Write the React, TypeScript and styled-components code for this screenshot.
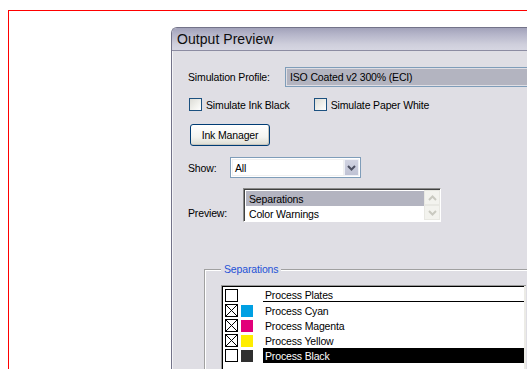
import React from "react";
import styled, { createGlobalStyle } from "styled-components";

const Global = createGlobalStyle`
  html, body { margin: 0; padding: 0; overflow: hidden; background: #fff; }
  body { width: 527px; height: 369px; font-family: "Liberation Sans", Arial, sans-serif; }
  #root { height: 100%; }
`;

const Frame = styled.div`
  margin: 10px 0 0 8px;
  height: calc(100% - 10px);
  border-top: 1px solid #ff0000;
  border-left: 1px solid #ff0000;
  padding: 16px 0 0 162px;
  box-sizing: border-box;
`;

const Window = styled.div`
  width: 380px;
  height: 400px;
  border: 1px solid #737389;
  border-right: none;
  border-bottom: none;
  border-top-left-radius: 6px;
  overflow: hidden;
  display: flex;
  flex-direction: column;
`;

const TitleBar = styled.div`
  height: 22px;
  flex: none;
  display: flex;
  align-items: center;
  padding-left: 5px;
  background: linear-gradient(#a2a2ba 0%, #b6b6ca 30%, #cfcfdc 75%, #d6d6e2 100%);
  border-bottom: 1px solid #8c8ca2;
  font-size: 14px;
  color: #0d0d0d;
  letter-spacing: 0.05px;
`;

const Body = styled.div`
  flex: 1;
  background: #dfdee4;
  box-shadow: inset 1px 0 0 #f4f4f7;
  padding: 15px 0 0 16px;
  display: flex;
  flex-direction: column;
  align-items: flex-start;
  font-size: 10.5px;
  letter-spacing: -0.15px;
  color: #000;
`;

const Row = styled.div<{ $mt?: number; $align?: string }>`
  display: flex;
  align-items: ${(p) => p.$align || "center"};
  margin-top: ${(p) => p.$mt ?? 0}px;
`;

const Label = styled.span<{ $w: number; $mb?: number }>`
  width: ${(p) => p.$w}px;
  flex: none;
  margin-bottom: ${(p) => p.$mb ?? 0}px;
`;

const ProfileBox = styled.div`
  width: 260px;
  height: 20px;
  border: 1px solid #7f9db9;
  border-right: none;
  padding: 1px 0 1px 1px;
  background: #dfdee4;
  box-sizing: border-box;
  display: flex;
`;

const ProfileValue = styled.div`
  flex: 1;
  background: #b3b4c0;
  display: flex;
  align-items: center;
  padding-left: 3px;
`;

const CheckLabel = styled.label<{ $ml?: number }>`
  display: flex;
  align-items: center;
  gap: 4px;
  margin-left: ${(p) => p.$ml ?? 0}px;
`;

const XPBox = styled.span`
  width: 13px;
  height: 13px;
  box-sizing: border-box;
  border: 1px solid #1c5180;
  background: linear-gradient(135deg, #dcdcd6 0%, #f2f2ee 60%, #ffffff 100%);
`;

const Button = styled.button`
  width: 80px;
  height: 22px;
  margin-left: 2px;
  border: 1px solid #003c74;
  border-radius: 3px;
  background: linear-gradient(#ffffff 0%, #f4f4f0 60%, #dcdcd2 100%);
  box-shadow: inset -1px -1px 0 #c6c6be;
  font-family: inherit;
  font-size: 10.5px;
  letter-spacing: -0.15px;
  color: #000;
  padding: 0;
`;

const ShowBox = styled.div`
  width: 131px;
  height: 21px;
  border: 1px solid #7f9db9;
  box-sizing: border-box;
  background: #fff;
  display: flex;
  padding: 1px;
`;

const ShowValue = styled.div`
  flex: 1;
  display: flex;
  align-items: center;
  padding-left: 2px;
  border: 1px solid #f0f0f0;
`;

const ArrowBtn = styled.div`
  width: 15px;
  flex: none;
  background: linear-gradient(#d2d4e2, #bfc2d4);
  border: 1px solid #eef0f6;
  box-sizing: border-box;
  display: flex;
  align-items: center;
  justify-content: center;
`;

const PreviewList = styled.div`
  width: 198px;
  height: 34px;
  box-sizing: border-box;
  border-top: 1px solid #8a8a8a;
  border-left: 1px solid #8a8a8a;
  border-right: 1px solid #ffffff;
  border-bottom: 1px solid #ffffff;
  box-shadow: inset 1px 1px 0 #404040;
  background: #fff;
  display: flex;
  padding: 2px 0 0 2px;
`;

const PreviewItems = styled.div`
  flex: 1;
  display: flex;
  flex-direction: column;
`;

const PreviewItem = styled.div<{ $sel?: boolean }>`
  height: 15px;
  display: flex;
  align-items: center;
  padding-left: 3px;
  background: ${(p) => (p.$sel ? "#b3b4c0" : "#fff")};
`;

const ScrollCol = styled.div`
  width: 16px;
  display: flex;
  flex-direction: column;
  margin-top: -1px;
`;

const ScrollBtn = styled.div`
  height: 15px;
  border: 1px solid #e8e8e2;
  background: #f3f3ee;
  box-sizing: border-box;
  display: flex;
  align-items: center;
  justify-content: center;
`;

const Group = styled.fieldset`
  margin: 41px 0 0 16px;
  padding: 9px 0 0 16px;
  width: 360px;
  height: 200px;
  border: 1px solid #a0a0a0;
  border-right: none;
  border-bottom: none;
  box-shadow: inset 1px 1px 0 #ffffff;
  min-width: 0;
`;

const Legend = styled.legend`
  padding: 0 3px;
  color: #2452d6;
  background: #dfdee4;
  line-height: 13px;
`;

const SepList = styled.div`
  width: 305px;
  height: 120px;
  border-top: 1px solid #9a9a9a;
  border-left: 1px solid #9a9a9a;
  box-shadow: inset 1px 1px 0 #000;
  background: #fff;
  padding: 2px 0 0 2px;
  box-sizing: border-box;
  position: relative;
`;

const SepRow = styled.div`
  height: 15px;
  display: flex;
  align-items: center;
`;

const Box = styled.span`
  width: 13px;
  height: 13px;
  margin-left: 1px;
  box-sizing: border-box;
  border: 1px solid #000;
  background: #fff;
  display: flex;
  flex: none;
`;

const Swatch = styled.span<{ $c?: string }>`
  width: 12px;
  height: 12px;
  margin-left: 3px;
  flex: none;
  background: ${(p) => p.$c || "transparent"};
`;

const SepName = styled.span<{ $sel?: boolean; $header?: boolean }>`
  flex: 1;
  margin-left: 10px;
  height: ${(p) => (p.$header ? 14 : 15)}px;
  display: flex;
  align-items: center;
  padding: 1px 0 0 2px;
  box-sizing: border-box;
  background: ${(p) => (p.$sel ? "#000" : "transparent")};
  color: ${(p) => (p.$sel ? "#fff" : "#000")};
  border-bottom: ${(p) => (p.$header ? "1px solid #000" : "none")};
  align-self: flex-start;
`;

const RightEdge = styled.div`
  position: absolute;
  top: 0;
  right: 0;
  width: 2px;
  height: 100%;
  background: #ecebe6;
`;

const Chevron = ({ color, up }: { color: string; up?: boolean }) => (
  <svg width="9" height="6" viewBox="0 0 9 6">
    <path
      d={up ? "M1 5 L4.5 1.5 L8 5" : "M1 1 L4.5 4.5 L8 1"}
      fill="none"
      stroke={color}
      strokeWidth="2"
    />
  </svg>
);

const XMark = () => (
  <svg width="11" height="11" viewBox="0 0 11 11">
    <path d="M0 0 L11 11 M11 0 L0 11" stroke="#000" strokeWidth="1" />
  </svg>
);

const seps = [
  { name: "Process Cyan", color: "#00a0e3", checked: true },
  { name: "Process Magenta", color: "#e2007a", checked: true },
  { name: "Process Yellow", color: "#ffed00", checked: true },
  { name: "Process Black", color: "#2f2f2f", checked: false, sel: true },
];

export default function App() {
  return (
    <>
      <Global />
      <Frame>
        <Window>
          <TitleBar>Output Preview</TitleBar>
          <Body>
            <Row $mt={1}>
              <Label $w={97}>Simulation Profile:</Label>
              <ProfileBox>
                <ProfileValue>ISO Coated v2 300% (ECI)</ProfileValue>
              </ProfileBox>
            </Row>
            <Row $mt={11}>
              <CheckLabel $ml={1}>
                <XPBox />
                Simulate Ink Black
              </CheckLabel>
              <CheckLabel $ml={24}>
                <XPBox />
                Simulate Paper White
              </CheckLabel>
            </Row>
            <Row $mt={13}>
              <Button>Ink Manager</Button>
            </Row>
            <Row $mt={11}>
              <Label $w={42}>Show:</Label>
              <ShowBox>
                <ShowValue>All</ShowValue>
                <ArrowBtn>
                  <Chevron color="#4d5062" />
                </ArrowBtn>
              </ShowBox>
            </Row>
            <Row $mt={10} $align="flex-end">
              <Label $w={55} $mb={3}>Preview:</Label>
              <PreviewList>
                <PreviewItems>
                  <PreviewItem $sel>Separations</PreviewItem>
                  <PreviewItem>Color Warnings</PreviewItem>
                </PreviewItems>
                <ScrollCol>
                  <ScrollBtn>
                    <Chevron color="#c9c9c0" up />
                  </ScrollBtn>
                  <ScrollBtn>
                    <Chevron color="#c9c9c0" />
                  </ScrollBtn>
                </ScrollCol>
              </PreviewList>
            </Row>
            <Group>
              <Legend>Separations</Legend>
              <SepList>
                <SepRow>
                  <Box />
                  <Swatch />
                  <SepName $header>Process Plates</SepName>
                </SepRow>
                {seps.map((s) => (
                  <SepRow key={s.name}>
                    <Box>{s.checked && <XMark />}</Box>
                    <Swatch $c={s.color} />
                    <SepName $sel={s.sel}>{s.name}</SepName>
                  </SepRow>
                ))}
                <RightEdge />
              </SepList>
            </Group>
          </Body>
        </Window>
      </Frame>
    </>
  );
}
